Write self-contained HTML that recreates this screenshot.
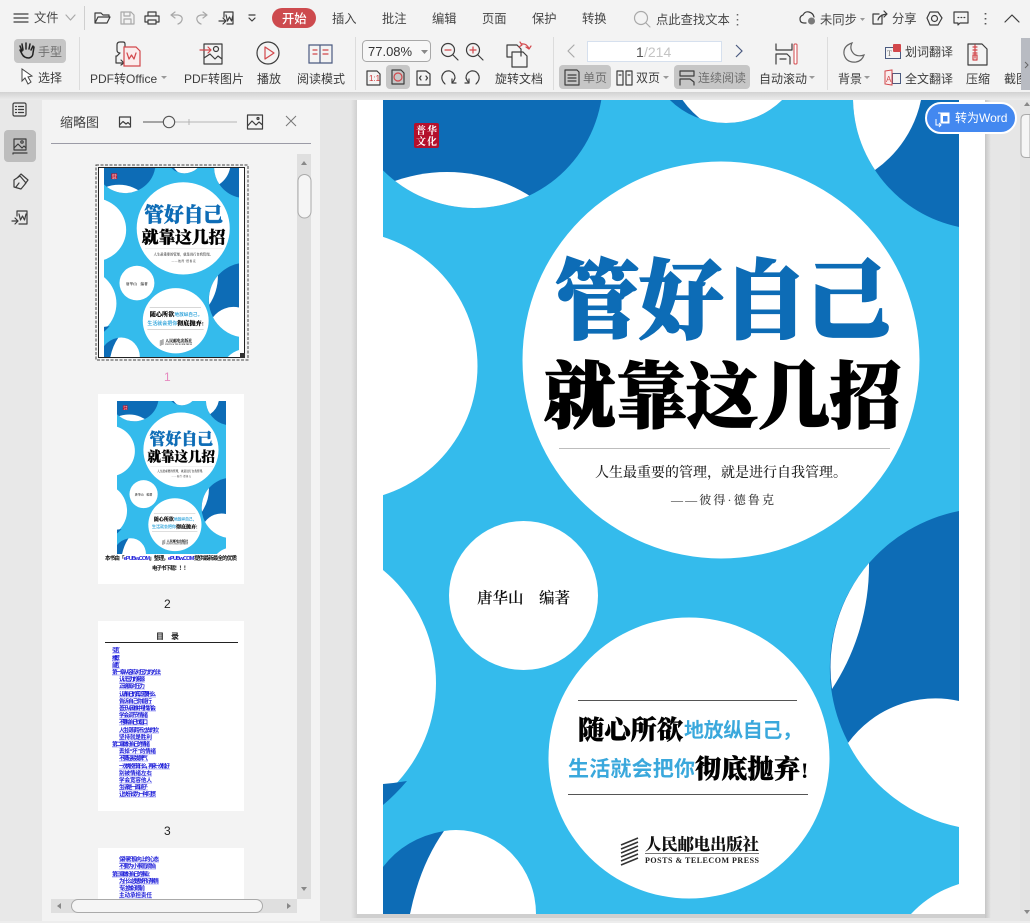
<!DOCTYPE html>
<html lang="zh-CN"><head><meta charset="utf-8"><title>PDF</title>
<style>
html,body{margin:0;padding:0;width:1030px;height:923px;overflow:hidden;background:#e6e6e6}
svg{display:block}
text{font-family:"Liberation Sans","Noto Sans CJK SC",sans-serif}
.t{font-size:12px;fill:#3c3c3c}
.g{font-size:12px;fill:#6f6f6f}
.m{font-size:12.3px;fill:#454545}
.s{font-family:"Liberation Serif","Noto Serif CJK SC",serif}
.ic{fill:none;stroke:#3d3d3d;stroke-width:1.2;stroke-linejoin:round;stroke-linecap:round}
.lg{fill:none;stroke:#a9a9a9;stroke-width:1.2;stroke-linejoin:round;stroke-linecap:round}
.rd{fill:none;stroke:#d2474b;stroke-width:1.2;stroke-linejoin:round;stroke-linecap:round}
.toc text{font-size:5.6px;fill:#1c1cd8;font-weight:700}
.toc line{stroke:#6c6cf0;stroke-width:.6}
</style></head><body>
<svg width="1030" height="923" viewBox="0 0 1030 923" xmlns="http://www.w3.org/2000/svg" style="overflow:hidden">
<defs>
<linearGradient id="sh" x1="0" y1="0" x2="0" y2="1"><stop offset="0" stop-color="#d2d2d2"/><stop offset="1" stop-color="#ececec"/></linearGradient>
<linearGradient id="sr" x1="0" y1="0" x2="1" y2="0"><stop offset="0" stop-color="#c6c6c6"/><stop offset="1" stop-color="#e6e6e6"/></linearGradient>
<linearGradient id="sl" x1="1" y1="0" x2="0" y2="0"><stop offset="0" stop-color="#d0d0d0"/><stop offset="1" stop-color="#e6e6e6"/></linearGradient>
<symbol id="cover" viewBox="383 100 576 814" preserveAspectRatio="none">
<clipPath id="c1"><circle cx="474" cy="79" r="129"/></clipPath>
<clipPath id="c3"><circle cx="726" cy="43" r="80"/></clipPath>
<rect x="383" y="100" width="576" height="814" fill="#34bbec"/>
<circle cx="474" cy="79" r="129" fill="#0d6cb6"/>
<circle cx="447" cy="327" r="155" fill="#fff" clip-path="url(#c1)"/>
<path d="M853 100A133 133 0 0 0 959 227V100Z" fill="#0d6cb6"/>
<path d="M853 100A133 133 0 0 0 875 170A114 114 0 0 0 921 100Z" fill="#fff"/>
<circle cx="726" cy="43" r="80" fill="#0d6cb6"/>
<circle cx="760" cy="45" r="95" fill="#fff" clip-path="url(#c3)"/>
<circle cx="342" cy="366" r="135.5" fill="#fff"/>
<circle cx="289" cy="683" r="147" fill="#fff"/>
<path d="M383 784Q395 783 407 781Q395 795 383 805Z" fill="#0d6cb6"/>
<path d="M959 511A160 160 0 0 0 959 825Z" fill="#0d6cb6"/>
<path d="M869 563A226 226 0 0 1 832 689A160 160 0 0 1 869 563Z" fill="#fff"/>
<path d="M848 743A108 108 0 0 1 959 701V827A160 160 0 0 1 848 743Z" fill="#fff"/>
<path d="M911 914A110 110 0 0 1 959 884V914Z" fill="#fff"/>
<path d="M383 867Q405 838 444 831L410 914H383Z" fill="#0d6cb6"/>
<path d="M444 831Q450 830 456 830A80 84 0 0 1 536 914H410Q420 865 444 831Z" fill="#fff"/>
<circle cx="721" cy="360" r="198.5" fill="#fff"/>
<circle cx="523.5" cy="595.5" r="74.5" fill="#fff"/>
<circle cx="689" cy="758" r="140.5" fill="#fff"/>
<rect x="414" y="123" width="25" height="25" rx="2" fill="#b4102c"/>
<text class="s" x="416" y="134" font-size="10" fill="#fff" font-weight="700" textLength="21">普华</text>
<text class="s" x="416" y="145" font-size="10" fill="#fff" font-weight="700" textLength="21">文化</text>
<text class="s" x="555" y="331" font-size="86" font-weight="900" fill="#0d6cb6" stroke="#0d6cb6" stroke-width="2.2" textLength="336" lengthAdjust="spacingAndGlyphs">管好自己</text>
<text class="s" x="544" y="422" font-size="72" font-weight="900" fill="#000" stroke="#000" stroke-width="1.5" textLength="357" lengthAdjust="spacingAndGlyphs">就靠这几招</text>
<rect x="559" y="448" width="331" height="1" fill="#bdbdbd"/>
<text class="s" x="595" y="477" font-size="14" fill="#222" font-weight="500" textLength="252">人生最重要的管理，就是进行自我管理。</text>
<text class="s" x="671" y="504" font-size="12" fill="#333" font-weight="500" textLength="103">——彼得·德鲁克</text>
<text class="s" x="477" y="603" font-size="15.5" fill="#111" font-weight="600">唐华山</text>
<text class="s" x="539" y="603" font-size="15.5" fill="#111" font-weight="600">编著</text>
<rect x="578" y="700" width="219" height="1" fill="#555"/>
<rect x="568" y="794" width="240" height="1" fill="#555"/>
<text class="s" x="578" y="739" font-size="26" font-weight="900" fill="#000" stroke="#000" stroke-width=".5" textLength="105">随心所欲</text>
<text x="684" y="737" font-size="20" font-weight="700" fill="#3aa8dc" textLength="118">地放纵自己，</text>
<text x="568" y="776" font-size="21" font-weight="700" fill="#3aa8dc" textLength="127">生活就会把你</text>
<text class="s" x="695" y="778" font-size="26" font-weight="900" fill="#000" stroke="#000" stroke-width=".5" textLength="105">彻底抛弃</text>
<text class="s" x="801" y="778" font-size="22" font-weight="700" fill="#000">!</text>
<g stroke="#333" stroke-width="1.6"><path d="M621 845L638 838M621 849L638 842M621 853L638 846M621 857L638 850M621 861L638 854M621 865L638 858"/></g>
<text class="s" x="645" y="850" font-size="16.5" font-weight="900" fill="#111" textLength="114">人民邮电出版社</text>
<rect x="645" y="853" width="114" height="1" fill="#777"/>
<text class="s" x="645" y="863" font-size="8" font-weight="700" fill="#222" textLength="114">POSTS &amp; TELECOM PRESS</text>
</symbol>
</defs>

<rect width="1030" height="923" fill="#e6e6e6"/>

<!-- left rail and panel -->
<rect x="0" y="92" width="42" height="831" fill="#e8e8e8"/>
<rect x="42" y="92" width="278" height="831" fill="#f3f3f3"/>

<!-- viewer sheet -->
<rect x="351" y="100" width="6" height="818" fill="url(#sl)"/>
<rect x="985" y="100" width="6" height="818" fill="url(#sr)"/>
<rect x="357" y="914" width="628" height="4" fill="#cfcfcf"/>
<rect x="357" y="100" width="628" height="814" fill="#fff"/>
<use href="#cover" x="383" y="100" width="576" height="814"/>

<!-- toolbar -->
<rect x="0" y="92" width="1030" height="8" fill="url(#sh)"/>
<rect width="1030" height="92" fill="#f3f3f3"/>

<!-- row 1 -->
<path d="M14 14H28M14 18H28M14 22H28" class="ic"/>
<text class="m" x="34" y="22">文件</text>
<path d="M66 15L70.500 20L75 15" class="lg"/>
<rect x="84" y="6" width="1" height="24" fill="#cfcfcf"/>
<path d="M95 23V13H101L103 15H109V17M95 23L98 17H110L107 23Z" class="ic"/>
<path d="M121 12H131L134 15V24H121ZM124 12V16H130V12M124 24V19H131V24" class="lg"/>
<path d="M148 16V12H156V16M147 22H145V16H159V22H157M148 20H156V24H148Z" class="ic" stroke-width="1.5"/>
<path d="M171 15L175 12M171 15L175 18M171 15H178Q183 16 182 20Q181 23 178 24" class="lg"/>
<path d="M207 15L203 12M207 15L203 18M207 15H201Q196 16 197 20Q198 23 201 24" class="lg"/>
<path d="M224 12H233V24H227M224 12V17M226 15L227.500 21L229.500 17L231.500 21L233 15M219 21H226M223 18L226 21L223 24" class="ic"/>
<path d="M249 15H255M249 18L252 21L255 18" class="ic"/>
<rect x="272" y="8" width="44" height="20" rx="10" fill="#cd4a4e"/>
<text x="282" y="23" font-size="12.3" fill="#fff" font-weight="500">开始</text>
<text class="m" x="332" y="23">插入</text>
<text class="m" x="382" y="23">批注</text>
<text class="m" x="432" y="23">编辑</text>
<text class="m" x="482" y="23">页面</text>
<text class="m" x="532" y="23">保护</text>
<text class="m" x="582" y="23">转换</text>
<circle cx="641" cy="18" r="6.500" class="lg"/><path d="M646 23L650 27" class="lg"/>
<text class="m" x="656" y="24">点此查找文本</text>
<path d="M737.500 14v1.500M737.500 19v1.500M737.500 24v1.500" stroke="#666" stroke-width="1.500" fill="none"/>
<path d="M806 23H804Q800 23 800 19Q800 16 803 15Q805 11 809 12Q813 13 814 17" class="ic"/>
<circle cx="811.500" cy="21" r="3.500" fill="#7a7a7a"/>
<text class="m" x="820" y="24">未同步</text>
<path d="M860 18H865L862.500 21Z" fill="#999"/>
<path d="M882 15V24H873V14H879M878 20Q879 15 887 14M884 11L887 14L884 17" class="ic"/>
<text class="m" x="892" y="23">分享</text>
<path d="M930 12H938L942 18L938 25H930L927 18Z" class="ic"/><circle cx="934.500" cy="18.500" r="3" class="ic"/>
<path d="M954 12H968V23H960L958 25V23H954ZM958 17.500h.8M961 17.500h.8M964 17.500h.8" class="ic"/>
<path d="M985.500 13v1.500M985.500 18v1.500M985.500 23v1.500" stroke="#555" stroke-width="1.700" fill="none"/>
<path d="M1005 22L1012 15L1019 22" class="ic"/>

<!-- row 2 left -->
<rect x="14" y="39" width="52" height="24" rx="4" fill="#c6c6c6"/>
<path d="M20 50L22 54Q24 58 29 58Q33 57 33 53L34 47M22 51L20 46M23 50L22 44M26 49L26 43M29 49L30 44M31 50L33 46" fill="none" stroke="#222" stroke-width="1.500" stroke-linecap="round"/>
<text class="g" x="38" y="56">手型</text>
<path d="M22 69L22 81L25 78L28 84L31 82L28 77L32 76Z" fill="#fff" stroke="#444" stroke-width="1"/>
<text class="t" x="38" y="82">选择</text>
<rect x="79" y="37" width="1" height="53" fill="#dcdcdc"/>
<path d="M125 50V44Q125 42 123 42H120Q117 42 117 45V50Q117 53 120 53M117 56H116V63H124M120 53L117 56M121 60L124 63L121 65" class="ic"/>
<path d="M124 47H136L140 51V66H124Z" fill="#fbecec" stroke="#d2474b" stroke-width="1.200"/>
<path d="M127 53L129 59L131.500 55L134 59L136 53" class="rd"/>
<text class="t" x="90" y="83">PDF转Office</text>
<path d="M161 76H167L164 79Z" fill="#999"/>
<path d="M204 44H222V64H204ZM204 58L210 54L215 59L218 56L222 59" class="ic"/>
<circle cx="216" cy="49" r="2.500" class="ic"/>
<path d="M200 50H211M208 47L211 50L208 53" class="rd"/>
<text class="t" x="184" y="83">PDF转图片</text>
<circle cx="268" cy="53" r="11" class="ic"/><path d="M265 47L274 53L265 59Z" class="rd"/>
<text class="t" x="257" y="83">播放</text>
<path d="M309 45H320V63H309ZM320 45H332V63H320" fill="none" stroke="#4a5a80" stroke-width="1.200"/>
<path d="M313 50H317M313 54H317M323 50H328M323 54H328" class="rd"/>
<text class="t" x="297" y="83">阅读模式</text>
<rect x="355" y="37" width="1" height="53" fill="#dcdcdc"/>
<rect x="362.500" y="40.500" width="68" height="21" rx="4" fill="#f7f7f7" stroke="#a8a8a8"/>
<text x="368" y="56" font-size="13" fill="#333">77.08%</text>
<path d="M421 50H428L424.500 54Z" fill="#888"/>
<circle cx="448" cy="50" r="6.500" class="ic"/><path d="M445 50H451" class="rd"/><path d="M453 55L458 60" class="ic" stroke-width="2"/>
<circle cx="473" cy="50" r="6.500" class="ic"/><path d="M470 50H476M473 47V53" class="rd"/><path d="M478 55L483 60" class="ic" stroke-width="2"/>
<path d="M367 71H377L380 74V85H367Z" class="ic"/><text x="369" y="81" font-size="8" fill="#c33">1:1</text>
<rect x="386" y="65" width="24" height="24" rx="4" fill="#c6c6c6"/>
<path d="M392 70H401L404 73V84H392Z" class="ic"/><circle cx="398" cy="77" r="4" class="rd"/>
<path d="M417 71H426L430 74V85H417ZM421 76L419.500 78L421 80M426 76L427.500 78L426 80" class="ic"/>
<path d="M445 84Q441 80 442 76Q444 70 450 71Q455 73 455 78Q454 81 452 83" class="ic"/><path d="M452 79V83H456" class="ic"/>
<path d="M476 84Q480 80 479 76Q477 70 471 71Q466 73 466 78Q467 81 469 83" class="ic"/><path d="M469 79V83H465" class="ic"/>
<path d="M507 49H517L521 53V60M507 49V61H512M512 56H523L527 60V71H512Z" class="ic" transform="translate(0 -4)"/>
<path d="M521 44Q527 43 529 49M529 49L526 47M529 49L531 46M520 42L522 45L519 47" class="rd"/>
<text class="t" x="495" y="83">旋转文档</text>
<rect x="553" y="37" width="1" height="53" fill="#dcdcdc"/>
<path d="M574 45L568 51L574 57" class="lg"/>
<rect x="587.500" y="41.500" width="134" height="20" fill="#fff" stroke="#d6e0ee"/>
<text x="636" y="57" font-size="14" fill="#555">1</text><text x="644" y="57" font-size="14" fill="#c4c4c4">/214</text>
<path d="M736 45L742 51L736 57" fill="none" stroke="#4a5a80" stroke-width="1.200"/>
<rect x="559" y="65" width="52" height="24" rx="4" fill="#c6c6c6"/>
<path d="M565 70H577L579 72V85H565ZM568 75H576M568 78H576M568 81H576" class="ic"/>
<text class="g" x="583" y="82">单页</text>
<path d="M617 71H623V85H617ZM626 71H632V85H626ZM619 75H621M628 75H630" class="ic"/>
<text class="t" x="636" y="82">双页</text>
<path d="M663 76H669L666 79Z" fill="#999"/>
<rect x="674" y="65" width="76" height="24" rx="4" fill="#c6c6c6"/>
<path d="M680 71H694V76H680ZM680 85V79H690L694 82V85" class="ic"/>
<text class="g" x="698" y="82">连续阅读</text>
<path d="M776 44V50H792V44M776 64V54H787L790 57V64M780 59H786" class="ic"/>
<rect x="794" y="44" width="3" height="20" rx="1" fill="#fff" stroke="#d2474b"/>
<text class="t" x="759" y="83">自动滚动</text>
<path d="M809 76H815L812 79Z" fill="#999"/>
<rect x="827" y="37" width="1" height="53" fill="#dcdcdc"/>
<path d="M852 43Q843 46 844 54Q846 63 856 62Q862 61 864 55Q858 57 854 54Q849 49 852 43Z" fill="none" stroke="#666" stroke-width="1.200"/>
<text class="t" x="838" y="83">背景</text>
<path d="M864 76H870L867 79Z" fill="#999"/>
<rect x="885.500" y="47.500" width="15" height="11" fill="none" stroke="#4a5a80"/>
<text x="887" y="56" font-size="8" fill="#777" class="s">T</text>
<rect x="893" y="44" width="8" height="8" rx="1" fill="#d2474b"/>
<text class="t" x="905" y="56">划词翻译</text>
<rect x="892.500" y="73.500" width="8" height="10" fill="none" stroke="#4a5a80"/>
<path d="M885 71L892 70V85L885 84Z" fill="#fbecec" stroke="#d2474b"/>
<text x="886" y="82" font-size="8" fill="#d2474b">A</text>
<text class="t" x="905" y="83">全文翻译</text>
<path d="M968 44H982L987 49V65H968Z" class="ic"/>
<path d="M975 45V58M973 47H977M973 50H977M973 53H977" class="rd"/><rect x="973" y="55" width="4" height="5" class="rd"/>
<text class="t" x="966" y="83">压缩</text>
<text class="t" x="1004" y="83">截图</text>
<rect x="1021" y="38" width="9" height="52" fill="#b8bbc2"/>
<path d="M1025 62L1028 65L1025 68" fill="none" stroke="#666"/>

<!-- side rail -->
<rect x="13" y="103" width="13" height="13" rx="1.500" class="ic"/>
<path d="M15.500 106.500h1M15.500 109.500h1M15.500 112.500h1M18.500 106.500h5M18.500 109.500h5M18.500 112.500h5" class="ic" stroke-width="1"/>
<rect x="4" y="130" width="32" height="32" rx="4" fill="#bdbdbd"/>
<path d="M14 139H26V150H14ZM14 148L18 144L22 148L24 146L26 148M13 153H27M13 153V154" class="ic"/>
<circle cx="22" cy="142" r="1.200" class="ic"/>
<path d="M14 187V180L20 176L26 183L21 189ZM17 178L21 174L28 180L25 184M16 187L19 183" class="ic"/>
<path d="M17 211H27V224H19M17 211V216M19 214L20.500 220L22.500 216L24.500 220L26 214M12 221H18M15 218L18 221L15 224" class="ic"/>

<!-- panel header -->
<text x="60" y="127" font-size="13" fill="#444">缩略图</text>
<path d="M119.500 117H130.500V127H119.500ZM119.500 125L123 121.500L126 124L128 122.500L130.500 125" class="ic" stroke-width="1"/>
<path d="M143 122H163" stroke="#555" fill="none"/><path d="M175 122H237M189 119V125" stroke="#b5b5b5" fill="none"/>
<circle cx="169" cy="122" r="5.700" fill="#f3f3f3" stroke="#555" stroke-width="1.100"/>
<path d="M247.500 115H262.500V129H247.500ZM247.500 126L252 121L256 125L259 122L262.500 125" class="ic"/>
<circle cx="258" cy="118.500" r="1" class="ic"/>
<path d="M286 116L296 126M296 116L286 126" fill="none" stroke="#777" stroke-width="1"/>
<rect x="51" y="143" width="260" height="1" fill="#9b9ba6"/>

<!-- thumbnails -->
<rect x="96" y="165" width="152" height="195" fill="none" stroke="#444" stroke-dasharray="3 1.500"/>
<rect x="98.500" y="167.500" width="146" height="190" fill="#fff" stroke="#222"/>
<use href="#cover" x="104" y="168" width="135" height="189"/>
<rect x="240" y="353" width="5" height="5" fill="#333"/>
<text x="164" y="381" font-size="12" fill="#e68ac0">1</text>

<rect x="98" y="394" width="146" height="190" fill="#fff"/>
<use href="#cover" x="117" y="401" width="109" height="153"/>
<text x="105" y="560" font-size="5.500" font-weight="700" fill="#111" textLength="132">本书由「<tspan fill="#1a1ad8">ePUBw.COM</tspan>」整理，<tspan fill="#1a1ad8">ePUBw.COM</tspan> 提供最新最全的优质</text>
<text x="152" y="570" font-size="5.500" font-weight="700" fill="#111" textLength="37">电子书下载！！！</text>
<text x="164" y="608" font-size="12" fill="#222">2</text>

<rect x="98" y="621" width="146" height="190" fill="#fff"/>
<text x="156" y="639" font-size="8" font-weight="700" fill="#222">目</text>
<text x="171" y="639" font-size="8" font-weight="700" fill="#222">录</text>
<rect x="105" y="642" width="133" height="1" fill="#222"/>
<g class="toc">
<text x="112" y="652" textLength="8">引言</text><line x1="112" x2="120" y1="653" y2="653"/>
<text x="112" y="660" textLength="8">推荐</text><line x1="112" x2="120" y1="661" y2="661"/>
<text x="112" y="667" textLength="8">前言</text><line x1="112" x2="120" y1="668" y2="668"/>
<text x="112" y="674" textLength="49">第一章 从容应对压力的方法</text><line x1="112" x2="161" y1="675" y2="675"/>
<text x="119" y="681" textLength="26">认识压力的来源</text><line x1="119" x2="145" y1="682" y2="682"/>
<text x="119" y="688" textLength="26">正确面对压力</text><line x1="119" x2="145" y1="689" y2="689"/>
<text x="119" y="696" textLength="37">认清自己的真正需要什么</text><line x1="119" x2="156" y1="697" y2="697"/>
<text x="119" y="703" textLength="33">告诉自己你能行</text><line x1="119" x2="152" y1="704" y2="704"/>
<text x="119" y="710" textLength="37">善于从困难中寻找机会</text><line x1="119" x2="156" y1="711" y2="711"/>
<text x="119" y="717" textLength="29">学会调节情绪</text><line x1="119" x2="148" y1="718" y2="718"/>
<text x="119" y="724" textLength="29">不要给自己找借口</text><line x1="119" x2="148" y1="725" y2="725"/>
<text x="119" y="732" textLength="40">人生没有跨不过去的坎</text><line x1="119" x2="159" y1="733" y2="733"/>
<text x="119" y="739" textLength="33">坚持就是胜利</text><line x1="119" x2="152" y1="740" y2="740"/>
<text x="112" y="746" textLength="38">第二章 做好自己的情绪</text><line x1="112" x2="150" y1="747" y2="747"/>
<text x="119" y="753" textLength="37">丢掉“坏”的情绪</text><line x1="119" x2="156" y1="754" y2="754"/>
<text x="119" y="760" textLength="29">不要轻易发脾气</text><line x1="119" x2="148" y1="761" y2="761"/>
<text x="119" y="768" textLength="51">一次失败不算什么，再来一次就好</text><line x1="119" x2="170" y1="769" y2="769"/>
<text x="119" y="775" textLength="33">别被情绪左右</text><line x1="119" x2="152" y1="776" y2="776"/>
<text x="119" y="782" textLength="33">学会宽容他人</text><line x1="119" x2="152" y1="783" y2="783"/>
<text x="119" y="789" textLength="29">生活是一面镜子</text><line x1="119" x2="148" y1="790" y2="790"/>
<text x="119" y="796" textLength="37">让快乐成为一种习惯</text><line x1="119" x2="156" y1="797" y2="797"/>
</g>
<text x="164" y="835" font-size="12" fill="#222">3</text>

<rect x="98" y="848" width="146" height="51" fill="#fff"/>
<g class="toc">
<text x="119" y="861" textLength="40">保持积极向上的心态</text><line x1="119" x2="159" y1="862" y2="862"/>
<text x="119" y="868" textLength="37">不要为小事而烦恼</text><line x1="119" x2="156" y1="869" y2="869"/>
<text x="112" y="876" textLength="38">第三章 做好自己的事业</text><line x1="112" x2="150" y1="877" y2="877"/>
<text x="119" y="883" textLength="40">为什么总是做不好事情</text><line x1="119" x2="159" y1="884" y2="884"/>
<text x="119" y="890" textLength="26">专注做好眼前</text><line x1="119" x2="145" y1="891" y2="891"/>
<text x="119" y="897" textLength="33">主动承担责任</text><line x1="119" x2="152" y1="898" y2="898"/>
</g>

<!-- panel scrollbars -->
<rect x="297" y="154" width="14" height="745" fill="#dfdfdf"/>
<path d="M301 165H307L304 161Z" fill="#888"/>
<rect x="298" y="174.500" width="13" height="43.500" rx="6.500" fill="#f5f5f5" stroke="#aaa"/>
<path d="M301 887H307L304 891Z" fill="#888"/>
<rect x="51" y="899" width="246" height="14" fill="#dfdfdf"/>
<path d="M61 903V909L57 906Z" fill="#888"/>
<path d="M287 903V909L291 906Z" fill="#888"/>
<rect x="71.500" y="899.500" width="191" height="13" rx="6.500" fill="#f5f5f5" stroke="#aaa"/>

<!-- viewer scrollbar -->
<rect x="1020" y="100" width="10" height="823" fill="#e3e3e3"/>
<path d="M1024 106H1030L1027 102Z" fill="#888"/>
<path d="M1030 114.500H1026Q1021 114.500 1021 119.500V152.500Q1021 157.500 1026 157.500H1030Z" fill="#f5f5f5" stroke="#aaa"/>
<path d="M1024 910H1030L1027 914Z" fill="#888"/>
<rect x="0" y="921" width="1030" height="2" fill="#ededed"/>

<!-- convert button -->
<rect x="926" y="103" width="90" height="30" rx="15" fill="#4388f0" stroke="#fff" stroke-width="2"/>
<path d="M938 113H949V123H941V113" fill="#fff" stroke="#fff"/>
<rect x="943" y="116" width="4.500" height="5.500" fill="#4388f0"/>
<path d="M936 119V125H941M939 123L941 125L939 127" fill="none" stroke="#fff" stroke-width="1"/>
<text x="955" y="122" font-size="12" fill="#fff">转为Word</text>
</svg>
</body></html>
